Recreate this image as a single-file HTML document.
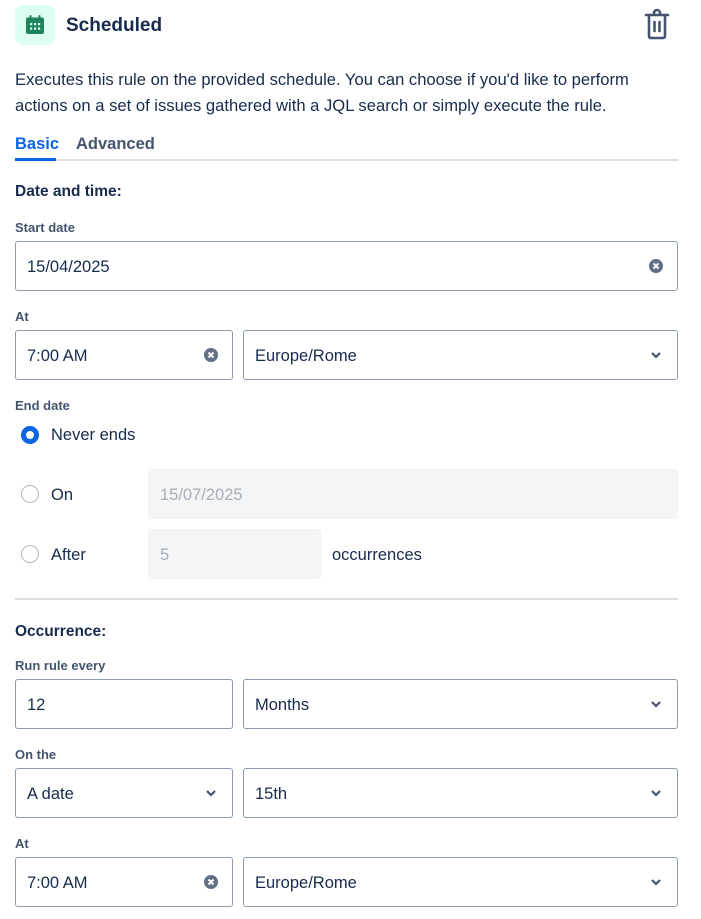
<!DOCTYPE html>
<html><head><meta charset="utf-8"><style>
body{margin:0;width:701px;height:919px;background:#fff;font-family:"Liberation Sans",sans-serif;color:#172b4d;position:relative;overflow:hidden}
.a{position:absolute}
.lbl{position:absolute;left:15px;font-size:13px;font-weight:bold;color:#44546f}
.h{position:absolute;left:15px;font-size:15.5px;font-weight:bold;color:#172b4d}
.in{position:absolute;border:1px solid #8c9bab;border-radius:3px;box-sizing:border-box;height:50px;font-size:16.5px;line-height:51px;padding-left:11px;color:#172b4d}
.dis{background:#f4f5f7;border-color:#f1f2f4;color:#a5adba}
.x{position:absolute;right:14px;top:17px;width:14px;height:14px}
.ch{position:absolute;right:15px;top:19px;width:12px;height:10px}
.r{position:absolute;left:21px;width:18px;height:18px;box-sizing:border-box;border:1.5px solid #b3b9c4;border-radius:50%}
.rt{position:absolute;left:51px;font-size:16.5px}
</style></head><body>
<div class="a" style="left:15px;top:5px;width:40px;height:40px;border-radius:8px;background:#dcfff1"></div>
<svg class="a" style="left:23px;top:13px" width="24" height="24" viewBox="0 0 24 24"><rect x="3" y="4.5" width="18" height="16.5" rx="2" fill="#1f845a"/><rect x="6.5" y="2" width="2" height="4" rx="1" fill="#1f845a"/><rect x="15.5" y="2" width="2" height="4" rx="1" fill="#1f845a"/><g fill="#dcfff1"><rect x="7" y="10" width="2.2" height="2.2"/><rect x="11" y="10" width="2.2" height="2.2"/><rect x="15" y="10" width="2.2" height="2.2"/><rect x="7" y="14.5" width="2.2" height="2.2"/><rect x="11" y="14.5" width="2.2" height="2.2"/><rect x="15" y="14.5" width="2.2" height="2.2"/></g></svg>
<div class="a" style="left:66px;top:15px;font-size:19px;font-weight:bold">Scheduled</div>
<svg class="a" style="left:643px;top:8px" width="28" height="32" viewBox="0 0 28 32"><path d="M11 6V5a3 3 0 0 1 6 0v1M3 7h22M6 8v20a2 2 0 0 0 2 2h12a2 2 0 0 0 2-2V8" fill="none" stroke="#44546f" stroke-width="2.6" stroke-linecap="round"/><path d="M11.5 14v9M16.5 14v9" stroke="#44546f" stroke-width="2.6" stroke-linecap="round"/></svg>
<div class="a" style="left:15px;top:67px;font-size:16.6px;line-height:26px;width:686px;white-space:nowrap">Executes this rule on the provided schedule. You can choose if you'd like to perform<br>actions on a set of issues gathered with a JQL search or simply execute the rule.</div>
<div class="a" style="left:15px;top:135px;font-size:16.5px;font-weight:bold;color:#0c66e4">Basic</div>
<div class="a" style="left:76px;top:135px;font-size:16.5px;font-weight:bold;color:#44546f">Advanced</div>
<div class="a" style="left:15px;top:159px;width:663px;height:2px;background:#dcdfe4"></div>
<div class="a" style="left:15px;top:158px;width:41px;height:3px;background:#0c66e4"></div>
<div class="h" style="top:183px">Date and time:</div>
<div class="lbl" style="top:220px">Start date</div>
<div class="in" style="left:15px;top:241px;width:663px">15/04/2025<svg class="x" viewBox="0 0 14 14"><circle cx="7" cy="7" r="7" fill="#626f86"/><path d="M4.5 4.5l5 5M9.5 4.5l-5 5" stroke="#fff" stroke-width="2"/></svg></div>
<div class="lbl" style="top:309px">At</div>
<div class="in" style="left:15px;top:330px;width:218px">7:00 AM<svg class="x" viewBox="0 0 14 14"><circle cx="7" cy="7" r="7" fill="#626f86"/><path d="M4.5 4.5l5 5M9.5 4.5l-5 5" stroke="#fff" stroke-width="2"/></svg></div>
<div class="in" style="left:243px;top:330px;width:435px">Europe/Rome<svg class="ch" viewBox="0 0 12 10"><path d="M2 3l4 4 4-4" fill="none" stroke="#44546f" stroke-width="2.2"/></svg></div>
<div class="lbl" style="top:398px">End date</div>
<div class="r" style="top:426px;border:5.5px solid #0c66e4"></div>
<div class="rt" style="top:426px">Never ends</div>
<div class="r" style="top:485px"></div><div class="rt" style="top:486px">On</div>
<div class="in dis" style="left:148px;top:469px;width:530px">15/07/2025</div>
<div class="r" style="top:545px"></div><div class="rt" style="top:546px">After</div>
<div class="in dis" style="left:148px;top:529px;width:173px">5</div>
<div class="a" style="left:332px;top:546px;font-size:16.5px">occurrences</div>
<div class="a" style="left:15px;top:598px;width:663px;height:2px;background:#dcdfe4"></div>
<div class="h" style="top:623px">Occurrence:</div>
<div class="lbl" style="top:658px">Run rule every</div>
<div class="in" style="left:15px;top:679px;width:218px">12</div>
<div class="in" style="left:243px;top:679px;width:435px">Months<svg class="ch" viewBox="0 0 12 10"><path d="M2 3l4 4 4-4" fill="none" stroke="#44546f" stroke-width="2.2"/></svg></div>
<div class="lbl" style="top:747px">On the</div>
<div class="in" style="left:15px;top:768px;width:218px">A date<svg class="ch" viewBox="0 0 12 10"><path d="M2 3l4 4 4-4" fill="none" stroke="#44546f" stroke-width="2.2"/></svg></div>
<div class="in" style="left:243px;top:768px;width:435px">15th<svg class="ch" viewBox="0 0 12 10"><path d="M2 3l4 4 4-4" fill="none" stroke="#44546f" stroke-width="2.2"/></svg></div>
<div class="lbl" style="top:836px">At</div>
<div class="in" style="left:15px;top:857px;width:218px">7:00 AM<svg class="x" viewBox="0 0 14 14"><circle cx="7" cy="7" r="7" fill="#626f86"/><path d="M4.5 4.5l5 5M9.5 4.5l-5 5" stroke="#fff" stroke-width="2"/></svg></div>
<div class="in" style="left:243px;top:857px;width:435px">Europe/Rome<svg class="ch" viewBox="0 0 12 10"><path d="M2 3l4 4 4-4" fill="none" stroke="#44546f" stroke-width="2.2"/></svg></div>
</body></html>
